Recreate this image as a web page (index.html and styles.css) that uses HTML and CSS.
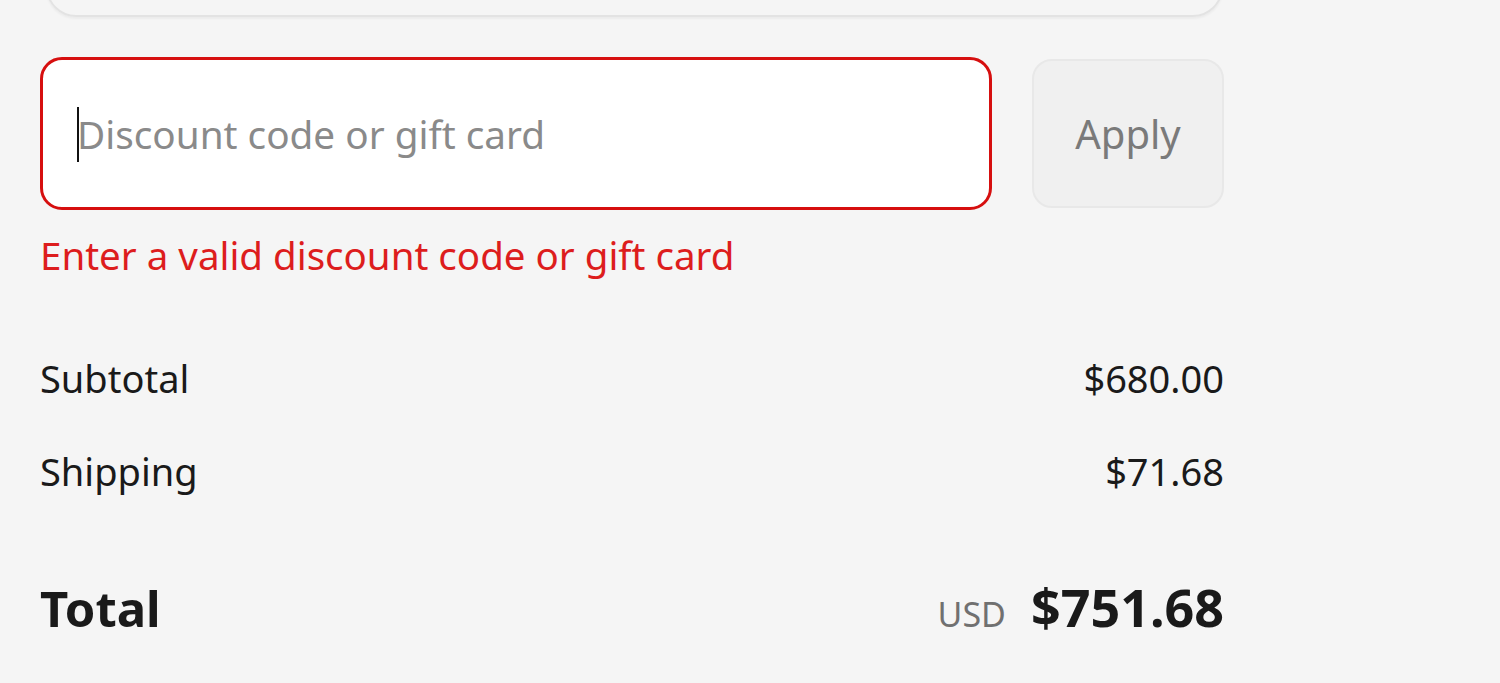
FILE: index.html
```html
<!DOCTYPE html>
<html lang="en">
<head>
    <meta charset="UTF-8">
    <title>Checkout summary</title>
    <link rel="stylesheet" href="styles.css">
</head>
<body>

<div class="summary">
    <div class="card-edge"></div>

    <form class="discount">
        <div class="discount-row">
            <div class="field">
                <span class="caret"></span>
                <input type="text" class="field-input" placeholder="Discount code or gift card">
            </div>
            <button type="button" class="btn-apply">Apply</button>
        </div>
        <p class="field-error">Enter a valid discount code or gift card</p>
    </form>

    <div class="lines">
        <div class="line">
            <span>Subtotal</span>
            <span>$680.00</span>
        </div>
        <div class="line">
            <span>Shipping</span>
            <span>$71.68</span>
        </div>
    </div>

    <div class="total">
        <span class="total-label">Total</span>
        <span class="total-value"><small class="currency">USD</small>$751.68</span>
    </div>
</div>

</body>
</html>
```

FILE: styles.css
```css
/* Global */
body {
    margin: 0;
    background: #f5f5f5;
    font-family: "Noto Sans", "Open Sans", sans-serif;
    color: #1a1a1a;
    overflow: hidden;
}

.summary {
    width: 1184px;
    padding: 0 40px;
}

/* bottom of the card above, cut off by the viewport */
.card-edge {
    height: 60px;
    margin: -47px 1px 0 6px;
    border: 2px solid #e3e3e3;
    border-radius: 30px;
    box-shadow: 0 2px 2px rgba(0, 0, 0, 0.04);
}

/* Discount form */
.discount {
    margin-top: 40px;
}

.discount-row {
    display: flex;
    gap: 40px;
    align-items: center;
}

.field {
    position: relative;
    flex: 1;
}

.field-input {
    display: block;
    box-sizing: border-box;
    width: 100%;
    height: 153px;
    padding: 0 34px;
    border: 3.5px solid #d60f0f;
    border-radius: 22px;
    background: #fff;
    font-family: inherit;
    font-size: 38.7px;
    color: #1a1a1a;
    outline: none;
}

.field-input::placeholder {
    color: #8a8a8a;
}

.caret {
    position: absolute;
    left: 37px;
    top: 50px;
    width: 2px;
    height: 55px;
    background: #111;
}

.btn-apply {
    width: 192px;
    height: 149px;
    border: 2px solid #e8e8e8;
    border-radius: 20px;
    background: #f0f0f0;
    font-family: inherit;
    font-size: 40px;
    color: #7a7a7a;
}

.field-error {
    margin: 22px 0 0;
    font-size: 38.5px;
    line-height: 47px;
    color: #dd1d1d;
}

/* Cost lines */
.lines {
    margin-top: 76px;
    display: flex;
    flex-direction: column;
    gap: 46px;
}

.line {
    display: flex;
    justify-content: space-between;
    font-size: 38px;
    line-height: 47px;
}

.total {
    margin-top: 82px;
    display: flex;
    justify-content: space-between;
    align-items: baseline;
    font-weight: 700;
    line-height: 60px;
}

.total-label {
    font-size: 49px;
}

.total-value {
    font-size: 52px;
}

.currency {
    margin-right: 25px;
    font-size: 34px;
    font-weight: 400;
    color: #707070;
}
```
